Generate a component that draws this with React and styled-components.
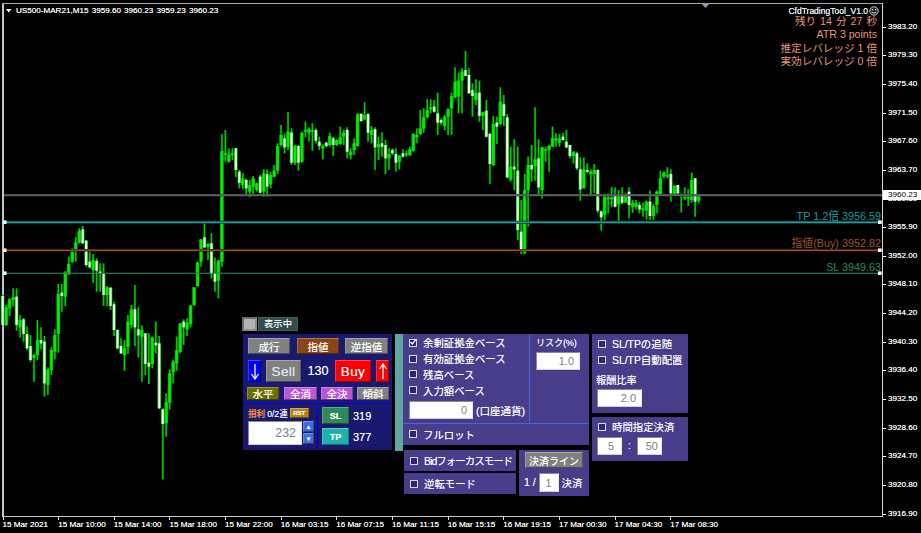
import React from "react";
import styled, { createGlobalStyle } from "styled-components";

const GlobalStyle = createGlobalStyle`
  html, body {
    margin: 0;
    padding: 0;
    background: #000;
  }
  body {
    font-family: "Liberation Sans", "Noto Sans CJK JP", sans-serif;
  }
`;

// candles read off the chart: wick top, wick bottom, body top, body bottom, white body
const SEG_A = [
  [255,345,258,345,1],[285,348,292,345,0],[265,318,268,295,0],[235,290,262,270,0],[235,362,260,345,1],
  [315,383,330,352,0],[325,395,328,372,1],[350,420,372,415,1],[375,455,408,450,1],[432,515,435,443,0],
  [330,450,390,435,0],[352,418,390,400,1],[378,560,395,520,1],[472,555,478,525,0],[412,495,420,480,0],
  [358,448,375,425,0],[222,428,252,372,0],[222,305,248,258,1],[183,288,187,260,0],[140,195,162,193,0],
  [115,158,120,155,0],[82,155,98,120,0],[55,100,62,98,0],[48,100,58,100,1],[90,170,92,165,1],
  [125,175,155,172,1],[132,218,150,180,0],[145,245,153,182,1],[160,245,185,190,1],[160,288,192,255,1],
  [228,288,232,255,0],[232,300,233,288,1],[275,378,283,360,1],[358,418,360,415,1],[385,432,408,430,1],
  [390,482,415,435,0],[315,432,335,410,0],[285,355,298,345,0],[225,408,298,352,1],[292,442,358,376,1],
  [346,515,360,380,0],[370,495,370,462,1],[370,522,458,470,1],[380,475,383,462,0],[335,430,398,406,1],
  [378,597,400,595,1],[595,808,598,642,1],[550,680,577,640,0],[478,598,490,578,0],[450,520,455,487,0],
  [380,482,420,460,0],[340,430,340,425,0],[328,405,335,352,1],[325,378,338,358,0],[285,352,287,342,0],
  [232,288,232,285,0],[155,230,158,228,0],[88,170,88,155,0],[38,115,82,112,1],[100,150,102,110,0],
  [70,205,100,192,1],[143,245,190,215,1],[150,265,152,212,0],
];
const SEG_B = [[42,440,93,425,0],[30,125,100,104,0],[85,128,103,125,0],[85,120,100,105,0]];
const SEG_C = [
  [295,382,295,360,1],[360,415,365,398,1],[370,418,385,405,0],[385,435,390,415,1],[390,442,405,425,0],
  [378,435,385,410,0],[398,425,400,420,0],[375,430,380,428,1],[358,440,370,425,0],[358,440,372,410,1],
  [365,415,375,403,0],[345,382,362,380,0],[280,372,288,362,0],[225,290,255,285,0],[250,310,265,292,1],
  [186,300,245,290,0],[235,345,248,338,1],[285,345,288,338,0],[285,362,288,338,1],[245,338,248,335,0],
  [215,262,240,245,0],[232,275,238,248,0],[220,302,240,245,0],[235,280,240,272,1],[260,300,275,288,1],
  [282,328,288,295,0],[275,292,278,288,1],[248,290,258,285,0],[260,318,265,285,1],[268,288,270,285,0],
  [230,285,262,282,0],[240,285,248,260,0],[232,325,240,305,1],[295,328,305,315,0],[265,315,280,300,0],
  [190,290,193,288,0],[190,215,192,213,1],[157,210,195,208,0],[190,275,192,248,1],[228,280,240,255,0],
  [232,360,238,292,1],[260,330,282,292,0],[247,320,280,290,1],[270,372,285,325,1],[295,360,312,325,0],
  [295,315,300,310,1],[295,365,312,338,1],[315,358,318,335,0],[298,322,310,320,1],[302,320,310,316,0],
  [290,318,298,315,0],[250,305,252,302,0],[235,280,255,262,0],[180,255,235,252,0],[175,248,202,235,0],
  [148,205,180,202,0],[148,190,172,178,0],[150,188,170,185,1],[128,255,190,218,1],[205,225,210,218,1],
  [195,240,200,228,0],[175,255,178,200,0],[128,255,138,175,0],[52,145,95,142,0],[68,190,92,140,0],
  [55,190,65,92,0],[3,78,60,78,1],[55,130,75,130,1],
];
const SEG_D = [
  [100,200,120,138,1],[88,165,128,150,0],[92,215,128,198,1],[185,240,187,197,0],[150,262,182,260,1],
  [248,402,252,342,1],[198,348,222,345,0],[200,282,218,230,1],[112,225,155,222,0],[135,228,163,198,1],
  [192,385,202,382,1],[290,395,350,388,0],[268,420,350,358,1],[290,570,362,540,1],[450,612,545,602,1],
  [372,610,420,610,0],[320,530,345,420,0],[285,395,345,358,1],[172,392,328,348,0],[268,435,325,412,1],
  [292,445,292,420,0],[290,335,298,295,0],[285,365,288,300,0],[230,290,265,290,0],[250,290,265,272,0],
  [252,290,265,278,0],[248,272,260,270,1],[240,295,275,292,1],[285,325,285,318,1],[305,340,305,318,0],
  [305,360,310,355,1],[322,452,358,418,1],[322,415,358,415,0],[340,370,360,365,1],[358,432,363,372,0],
  [342,430,360,372,0],[358,488,360,482,1],[482,542,484,502,1],[435,510,440,495,0],[430,490,442,448,0],
  [412,470,442,448,0],[412,472,435,470,1],[420,522,438,462,0],[412,462,438,458,1],[430,458,432,458,0],
  [412,505,425,465,1],[450,488,458,470,0],[450,478,460,470,0],[455,490,465,478,1],[458,500,475,478,0],
  [452,508,455,482,0],[422,510,455,498,1],[462,510,468,498,0],[422,490,425,465,0],[362,438,385,432,0],
  [365,385,368,380,0],[352,385,375,372,0],[358,455,372,430,1],[405,438,408,435,0],[405,435,405,430,1],
  [430,487,432,435,0],[412,450,440,436,0],[418,468,440,438,0],[368,458,390,450,0],[385,500,385,455,1],
  [435,460,435,452,0],
];

const toPage = (seg, top) =>
  seg.map(([a, b, c, d, w]) => [top + a / 3, top + b / 3, top + c / 3, top + d / 3, w]);

const CANDLES = [
  ...toPage(SEG_A, 210),
  ...toPage(SEG_B, 120),
  ...toPage(SEG_C, 50),
  ...toPage(SEG_D, 50),
];

const PRICES = [
  "3983.20", "3979.30", "3975.40", "3971.50", "3967.60", "3963.70", "3959.80", "3955.90", "3952.00",
  "3948.10", "3944.20", "3940.30", "3936.40", "3932.50", "3928.60", "3924.70", "3920.80", "3916.90",
];

const TIMES = [
  "15 Mar 2021", "15 Mar 10:00", "15 Mar 14:00", "15 Mar 18:00", "15 Mar 22:00", "16 Mar 03:15", "16 Mar 07:15",
  "16 Mar 11:15", "16 Mar 15:15", "16 Mar 19:15", "17 Mar 00:30", "17 Mar 04:30", "17 Mar 08:30",
];

const Screen = styled.div`
  width: 921px;
  height: 533px;
  display: grid;
  grid-template-columns: 883px 38px;
  grid-template-rows: 517px 16px;
  background: #000;
  overflow: hidden;
`;

const Stage = styled.div`
  position: relative;
  width: 883px;
  height: 517px;
`;

const ChartSvg = styled.svg`
  position: absolute;
  left: 0;
  top: 0;
  filter: blur(0.25px);
`;

const PriceAxis = styled.div`
  position: relative;
  padding-top: 12.7px;
  display: flex;
  flex-direction: column;
`;

const PriceLabel = styled.div`
  position: relative;
  height: 28.65px;
  line-height: 28.65px;
  padding-left: 5px;
  font-size: 8.1px;
  color: #f0f0f0;
  text-shadow: 0 0 0.6px #fff;

  &::before {
    content: "";
    position: absolute;
    left: 0;
    top: 14px;
    width: 3px;
    height: 1px;
    background: #fff;
  }
`;

const CurrentPrice = styled.div`
  position: absolute;
  left: 0;
  top: 190px;
  width: 38px;
  height: 10px;
  padding-left: 5px;
  box-sizing: border-box;
  line-height: 10px;
  font-size: 8.1px;
  color: #000;
  background: #fff;
`;

const TimeAxis = styled.div`
  grid-column: 1 / span 2;
  display: flex;
  padding-left: 2.5px;
`;

const TimeLabel = styled.div`
  position: relative;
  flex: 0 0 55.65px;
  font-size: 8.1px;
  line-height: 16px;
  color: #f0f0f0;
  text-shadow: 0 0 0.6px #fff;
  white-space: nowrap;

  &::before {
    content: "";
    position: absolute;
    left: 0;
    top: -1px;
    width: 1px;
    height: 4px;
    background: #ddd;
  }
`;

const TitleText = styled.div`
  position: absolute;
  left: 16px;
  top: 5.5px;
  display: flex;
  gap: 3.2px;
  font-size: 8.1px;
  line-height: 10px;
  color: #f0f0f0;
  text-shadow: 0 0 0.6px #fff;
  white-space: nowrap;
`;

const Hud = styled.div`
  position: absolute;
  right: 6px;
  top: 6px;
  display: flex;
  flex-direction: column;
  align-items: flex-end;
  color: #e9967a;
  font-size: 10.6px;
  line-height: 13.3px;
  white-space: nowrap;
`;

const ToolName = styled.div`
  display: flex;
  align-items: center;
  gap: 1px;
  height: 10px;
  margin-right: -2px;
  margin-bottom: -1px;
  font-size: 8.5px;
  line-height: 10px;
  color: #dfeaf5;
  text-shadow: 0 0 0.5px #fff;
`;

const Countdown = styled.div`
  word-spacing: 1.1px;
`;

const LineLabel = styled.div`
  position: absolute;
  right: 2px;
  top: ${({ $top }) => $top}px;
  font-size: 10.8px;
  line-height: 13px;
  color: ${({ $color }) => $color};
  white-space: nowrap;
`;

const Overlay = styled.div`
  position: absolute;
  left: 242px;
  top: 317px;
  display: flex;
  align-items: flex-start;
  color: #fff;
  text-shadow: 0 0 0.5px rgba(255, 255, 255, 0.7);
`;

const LeftColumn = styled.div`
  width: 150px;
  display: flex;
  flex-direction: column;
`;

const ToggleRow = styled.div`
  display: flex;
  height: 15px;
  gap: 1px;
`;

const ToggleBox = styled.div`
  width: 15px;
  height: 14px;
  box-sizing: border-box;
  background: #b4b4b4;
  border: 2px solid;
  border-color: #6c6c6c #8c8c8c #8c8c8c #6c6c6c;
`;

const ToggleText = styled.div`
  width: 40px;
  height: 14px;
  box-sizing: border-box;
  background: #2f4f4f;
  border: 1px solid #406060;
  font-size: 9.3px;
  line-height: 12px;
  text-align: center;
`;

const OrderPanel = styled.div`
  width: 149px;
  height: 116px;
  margin: 2px 0 0 1px;
  display: flex;
  flex-direction: column;
  background: #191970;
`;

const OrderTop = styled.div`
  height: 70px;
  padding: 4px 0 0 4px;
  box-sizing: border-box;
  border-bottom: 1.5px solid #0000e6;
  display: flex;
  flex-direction: column;
`;

const OrderRow = styled.div`
  display: flex;
  align-items: center;
  margin-top: ${({ $mt }) => $mt || 0}px;
  margin-left: ${({ $ml }) => $ml || 0}px;
`;

const Bevel = styled.div`
  width: ${({ $w }) => $w}px;
  height: ${({ $h }) => $h}px;
  margin-left: ${({ $ml }) => $ml || 0}px;
  box-sizing: border-box;
  display: flex;
  align-items: center;
  justify-content: center;
  background: ${({ $bg }) => $bg};
  border: 1.5px solid;
  border-color: rgba(255, 255, 255, 0.28) rgba(0, 0, 0, 0.3) rgba(0, 0, 0, 0.4) rgba(255, 255, 255, 0.2);
  color: ${({ $color }) => $color || "#fff"};
  font-size: ${({ $fs }) => $fs || 10.5}px;
  font-weight: ${({ $bold }) => ($bold ? 700 : 400)};
  letter-spacing: ${({ $ls }) => $ls || 0}px;
  white-space: nowrap;
`;

const Lot = styled.div`
  width: 34px;
  text-align: center;
  font-size: 12.6px;
`;

const OrderBottom = styled.div`
  flex: 1;
  display: grid;
  grid-template-columns: 75px 1fr;
`;

const RetryCell = styled.div`
  border-right: 1.5px solid #0000e6;
  padding: 3px 0 0 5px;
`;

const RetryHead = styled.div`
  display: flex;
  align-items: center;
  height: 11px;
  font-size: 8.6px;
`;

const RetryName = styled.span`
  color: #ff8c40;
  font-weight: 700;
  margin-right: 2px;
  text-shadow: none;
`;

const RetryInput = styled.div`
  display: flex;
  margin-top: 3px;
`;

const SpinColumn = styled.div`
  display: flex;
  flex-direction: column;
  gap: 1px;
  margin-left: 1px;
`;

const Field = styled.div`
  width: ${({ $w }) => $w}px;
  height: ${({ $h }) => $h}px;
  box-sizing: border-box;
  padding-right: ${({ $pr }) => $pr || 5}px;
  display: flex;
  align-items: center;
  justify-content: flex-end;
  background: #fff;
  border: 1px solid;
  border-color: #8a8a8a #e8e8e8 #d0d0d0 #8a8a8a;
  color: #7d7d7d;
  font-size: ${({ $fs }) => $fs || 11}px;
  text-shadow: none;
  flex: none;
`;

const StopCell = styled.div`
  display: flex;
  flex-direction: column;
  gap: 4px;
  padding: 3px 0 0 4px;
`;

const StopRow = styled.div`
  display: flex;
  align-items: center;
  gap: 4px;
  font-size: 11px;
`;

const Strip = styled.div`
  width: 8px;
  height: 117px;
  margin: 17px 0 0 3px;
  background: #5fa6a0;
`;

const RiskColumn = styled.div`
  width: 186px;
  margin-top: 17px;
  display: flex;
  flex-direction: column;
`;

const PurplePanel = styled.div`
  background: #483d8b;
  font-size: 10.4px;
  white-space: nowrap;
`;

const MainPanel = styled(PurplePanel)`
  height: 111px;
  display: grid;
  grid-template-columns: 127px 1fr;
  grid-template-rows: 90px 1fr;
`;

const BasisCell = styled.div`
  border-right: 1.5px solid #4169e1;
  border-bottom: 1.5px solid #4169e1;
  padding: 1px 0 0 6px;
`;

const RiskCell = styled.div`
  border-bottom: 1.5px solid #4169e1;
  padding: 1px 0 0 6px;
`;

const CheckRow = styled.div`
  display: flex;
  align-items: center;
  gap: 6px;
  height: ${({ $h }) => $h || 15.8}px;
  padding-left: ${({ $pl }) => $pl || 0}px;
`;

const Check = styled.span`
  position: relative;
  width: 8px;
  height: 8px;
  box-sizing: border-box;
  flex: none;
  background: #2e2770;
  border: 1.5px solid #d8d8ea;
`;

const Tick = styled.svg`
  position: absolute;
  left: -1.5px;
  top: -1.5px;
`;

const AmountRow = styled.div`
  display: flex;
  align-items: center;
  gap: 3px;
  margin-top: 3px;
  font-size: 10.6px;
  letter-spacing: -0.1px;
`;

const FullLot = styled.div`
  grid-column: 1 / span 2;
  display: flex;
  align-items: center;
  padding-left: 6px;
`;

const Caption = styled.div`
  height: 17px;
  line-height: 17px;
  font-size: 9.2px;
  letter-spacing: -0.2px;
`;

const LowerRow = styled.div`
  display: flex;
  gap: 3px;
  margin-top: 5px;
`;

const ModeColumn = styled.div`
  width: 112px;
  margin-left: 1px;
  display: flex;
  flex-direction: column;
  gap: 2px;
`;

const ModeRow = styled(PurplePanel)`
  height: 21px;
  display: flex;
  align-items: center;
  padding-left: 6px;
`;

const ModeText = styled.span`
  margin-left: 6px;
  letter-spacing: ${({ $ls }) => $ls || 0}px;
`;

const CloseBox = styled(PurplePanel)`
  width: 70px;
  height: 46px;
  box-sizing: border-box;
  padding: 2px 0 0 6px;
`;

const CloseRow = styled.div`
  display: flex;
  align-items: center;
  gap: 3px;
  margin-top: 5px;
  margin-left: -1px;
  font-size: 10.4px;
`;

const SideColumn = styled.div`
  width: 96px;
  margin: 17px 0 0 3px;
  display: flex;
  flex-direction: column;
  gap: 4px;
`;

const SidePanel = styled(PurplePanel)`
  height: ${({ $h }) => $h}px;
  box-sizing: border-box;
  padding: ${({ $pt }) => $pt}px 0 0 6px;
`;

const RewardTitle = styled.div`
  margin-top: 6px;
  margin-left: -2px;
  height: 14px;
  line-height: 14px;
  font-size: 10.2px;
`;

const RewardField = styled.div`
  margin: 1px 0 0 -1px;
`;

const TimeRow = styled.div`
  display: flex;
  align-items: center;
  margin: 2px 0 0 -1px;
`;

const Colon = styled.span`
  width: 15px;
  text-align: center;
  font-size: 10px;
`;

const Candle = ({ i, data }) => {
  const [hi, lo, top, bottom, white] = data;
  const x = 2.67 + 3.48 * i;
  const bodyH = Math.max(bottom - top, 1.6);
  return (
    <g>
      <rect x={x - 1.2} y={hi} width={2.4} height={lo - hi} fill="#004400" />
      <rect x={x - 0.7} y={hi} width={1.4} height={lo - hi} fill="#00d000" />
      <rect x={x - 1.8} y={top} width={3.6} height={bodyH} fill="#00c000" />
      <rect x={x - 1} y={top} width={2} height={bodyH} fill={white ? "#ffffff" : "#00f000"} />
    </g>
  );
};

const CheckBox = ({ on }) => (
  <Check>
    {on && (
      <Tick width="8" height="8" viewBox="0 0 8 8">
        <path d="M1.5 4 L3.3 6 L6.8 1.6" fill="none" stroke="#fff" strokeWidth="1.3" />
      </Tick>
    )}
  </Check>
);

const ArrowIcon = ({ up }) => (
  <svg width="10" height="17" viewBox="0 0 10 17">
    <path
      d={up ? "M5 16 V1.5 M1.5 6 L5 1 L8.5 6" : "M5 1 V15.5 M1.5 11 L5 16 L8.5 11"}
      fill="none"
      stroke="#fff"
      strokeWidth="1.3"
    />
  </svg>
);

const Smiley = () => (
  <svg width="10" height="10" viewBox="0 0 10 10">
    <circle cx="5" cy="5" r="4.2" fill="#20242c" stroke="#c8ccd4" strokeWidth="1" />
    <rect x="2.8" y="3" width="1.2" height="1.4" fill="#dfe4ee" />
    <rect x="6" y="3" width="1.2" height="1.4" fill="#dfe4ee" />
    <path d="M2.8 6.4 Q5 7.8 7.2 6.4" fill="none" stroke="#dfe4ee" strokeWidth="0.9" />
  </svg>
);

const ChartDrawing = () => (
  <ChartSvg width="883" height="517" viewBox="0 0 883 517">
    {/* window frame */}
    <rect x="2" y="3" width="2" height="514" fill="#c4c4c4" />
    <rect x="2" y="3" width="881" height="1" fill="#a8a8a8" />
    <rect x="882" y="3" width="1.4" height="514" fill="#d8d8d8" />
    <rect x="2" y="516" width="881" height="1.2" fill="#c8c8c8" />
    <polygon points="701,3 710,3 705.5,8" fill="#8da0b4" />
    <polygon points="6,9 11.5,9 8.7,12.5" fill="#fff" />
    {/* candles under the price lines */}
    {CANDLES.map((c, i) => (
      <Candle key={i} i={i} data={c} />
    ))}
    {/* price lines */}
    <rect x="4" y="194" width="878" height="2.4" fill="#34353c" />
    <rect x="4" y="194.6" width="878" height="1" fill="#7c7c8a" />
    <rect x="4" y="220.8" width="878" height="3" fill="#0c4040" />
    <rect x="4" y="221.6" width="878" height="1.4" fill="#1c9c9c" />
    <rect x="4" y="249" width="878" height="2.6" fill="#3a1c10" />
    <rect x="4" y="249.7" width="878" height="1.3" fill="#95492a" />
    <rect x="4" y="272.7" width="878" height="1.2" fill="#2c7a54" />
    {/* line handles */}
    <rect x="3" y="220.4" width="3.6" height="3.6" fill="#d8ffff" />
    <rect x="3" y="248.4" width="3.6" height="3.6" fill="#ffe0d4" />
    <rect x="3" y="271.4" width="3.6" height="3.6" fill="#e0ffe8" />
    <rect x="878" y="220.4" width="3.6" height="3.6" fill="#fff" />
    <rect x="878" y="248.4" width="3.6" height="3.6" fill="#fff" />
    <rect x="878" y="271.4" width="3.6" height="3.6" fill="#fff" />
  </ChartSvg>
);

export default function App() {
  return (
    <>
      <GlobalStyle />
      <Screen>
        <Stage>
          <ChartDrawing />
          <TitleText>
            <span>US500-MAR21,M15</span>
            <span>3959.60</span>
            <span>3960.23</span>
            <span>3959.23</span>
            <span>3960.23</span>
          </TitleText>
          <Hud>
            <ToolName>
              CfdTradingTool_V1.0
              <Smiley />
            </ToolName>
            <Countdown>残り 14 分 27 秒</Countdown>
            <div>ATR 3 points</div>
            <div>推定レバレッジ 1 倍</div>
            <div>実効レバレッジ 0 倍</div>
          </Hud>
          <LineLabel $top={210} $color="#1c9c9c">TP 1.2倍 3956.59</LineLabel>
          <LineLabel $top={237} $color="#a0522d">指値(Buy) 3952.82</LineLabel>
          <LineLabel $top={261} $color="#2e8b57">SL 3949.63</LineLabel>
          <Overlay>
            <LeftColumn>
              <ToggleRow>
                <ToggleBox />
                <ToggleText>表示中</ToggleText>
              </ToggleRow>
              <OrderPanel>
                <OrderTop>
                  <OrderRow $ml={1}>
                    <Bevel $w={42} $h={16} $bg="#808080">成行</Bevel>
                    <Bevel $w={42} $h={16} $ml={7} $bg="#8b4513">指値</Bevel>
                    <Bevel $w={43} $h={16} $ml={6} $bg="#808080">逆指値</Bevel>
                  </OrderRow>
                  <OrderRow $mt={6} $ml={1}>
                    <Bevel $w={13} $h={22} $bg="#0000ff"><ArrowIcon /></Bevel>
                    <Bevel $w={35} $h={22} $ml={5} $bg="#808080" $fs={13.6} $ls={0.3} $color="#e4e4e4">Sell</Bevel>
                    <Lot>130</Lot>
                    <Bevel $w={36} $h={22} $bg="#ff0000" $fs={13.6} $ls={0.4}>Buy</Bevel>
                    <Bevel $w={13} $h={22} $ml={5} $bg="#ff0000"><ArrowIcon up /></Bevel>
                  </OrderRow>
                  <OrderRow $mt={5}>
                    <Bevel $w={32} $h={13} $bg="#6e6e00">水平</Bevel>
                    <Bevel $w={33} $h={13} $ml={5} $bg="#ba55d3">全消</Bevel>
                    <Bevel $w={32} $h={13} $ml={4} $bg="#ba55d3">全決</Bevel>
                    <Bevel $w={32} $h={13} $ml={4} $bg="#808080">傾斜</Bevel>
                  </OrderRow>
                </OrderTop>
                <OrderBottom>
                  <RetryCell>
                    <RetryHead>
                      <RetryName>損利</RetryName>
                      0/2連
                      <Bevel $w={19} $h={10} $ml={2} $bg="#b8860b" $fs={6} $bold>RST</Bevel>
                    </RetryHead>
                    <RetryInput>
                      <Field $w={54} $h={24} $fs={12.4}>232</Field>
                      <SpinColumn>
                        <Bevel $w={11} $h={11} $bg="#3d6fd6" $fs={6}>▲</Bevel>
                        <Bevel $w={11} $h={11} $bg="#3d6fd6" $fs={6}>▼</Bevel>
                      </SpinColumn>
                    </RetryInput>
                  </RetryCell>
                  <StopCell>
                    <StopRow>
                      <Bevel $w={27} $h={17} $bg="#2e8b57" $fs={9} $bold>SL</Bevel>
                      319
                    </StopRow>
                    <StopRow>
                      <Bevel $w={27} $h={17} $bg="#20b2aa" $fs={9} $bold>TP</Bevel>
                      377
                    </StopRow>
                  </StopCell>
                </OrderBottom>
              </OrderPanel>
            </LeftColumn>
            <Strip />
            <RiskColumn>
              <MainPanel>
                <BasisCell>
                  <CheckRow><CheckBox on />余剰証拠金ベース</CheckRow>
                  <CheckRow><CheckBox />有効証拠金ベース</CheckRow>
                  <CheckRow><CheckBox />残高ベース</CheckRow>
                  <CheckRow><CheckBox />入力額ベース</CheckRow>
                  <AmountRow>
                    <Field $w={64} $h={18}>0</Field>
                    (口座通貨)
                  </AmountRow>
                </BasisCell>
                <RiskCell>
                  <Caption>リスク(%)</Caption>
                  <Field $w={44} $h={18}>1.0</Field>
                </RiskCell>
                <FullLot>
                  <CheckRow><CheckBox />フルロット</CheckRow>
                </FullLot>
              </MainPanel>
              <LowerRow>
                <ModeColumn>
                  <ModeRow><CheckBox /><ModeText $ls={-0.9}>Bidフォーカスモード</ModeText></ModeRow>
                  <ModeRow><CheckBox /><ModeText>逆転モード</ModeText></ModeRow>
                </ModeColumn>
                <CloseBox>
                  <Bevel $w={58} $h={16} $bg="#808080" $fs={10}>決済ライン</Bevel>
                  <CloseRow>
                    1 /
                    <Field $w={20} $h={19} $pr={6}>1</Field>
                    決済
                  </CloseRow>
                </CloseBox>
              </LowerRow>
            </RiskColumn>
            <SideColumn>
              <SidePanel $h={79} $pt={2}>
                <CheckRow><CheckBox />SL/TPの追随</CheckRow>
                <CheckRow><CheckBox />SL/TP自動配置</CheckRow>
                <RewardTitle>報酬比率</RewardTitle>
                <RewardField>
                  <Field $w={45} $h={18}>2.0</Field>
                </RewardField>
              </SidePanel>
              <SidePanel $h={44} $pt={2}>
                <CheckRow><CheckBox />時間指定決済</CheckRow>
                <TimeRow>
                  <Field $w={25} $h={18} $pr={7}>5</Field>
                  <Colon>:</Colon>
                  <Field $w={25} $h={18} $pr={3}>50</Field>
                </TimeRow>
              </SidePanel>
            </SideColumn>
          </Overlay>
        </Stage>
        <PriceAxis>
          {PRICES.map((p) => (
            <PriceLabel key={p}>{p}</PriceLabel>
          ))}
          <CurrentPrice>3960.23</CurrentPrice>
        </PriceAxis>
        <TimeAxis>
          {TIMES.map((t) => (
            <TimeLabel key={t}>{t}</TimeLabel>
          ))}
        </TimeAxis>
      </Screen>
    </>
  );
}
